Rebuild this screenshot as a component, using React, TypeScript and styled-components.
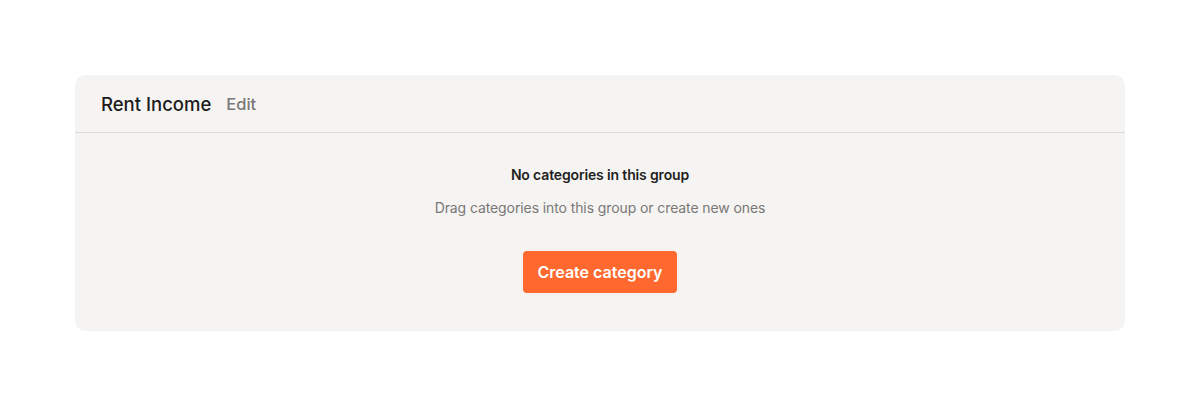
import styled, { createGlobalStyle } from "styled-components";

const GlobalStyle = createGlobalStyle`
  body {
    margin: 0;
    background: #ffffff;
    font-family: Inter, "Noto Sans", sans-serif;
  }
`;

const Page = styled.div`
  padding: 75px 75px 0 75px;
`;

const Card = styled.section`
  background: #f5f4f2;
  border-radius: 10px;
  overflow: hidden;
`;

const Header = styled.header`
  display: flex;
  align-items: center;
  gap: 15px;
  height: 58px;
  padding: 0 26px;
  border-bottom: 1px solid #dcdad7;
  box-sizing: border-box;
`;

const Title = styled.h2`
  margin: 0;
  font-size: 18.5px;
  font-weight: 500;
  color: #1c1c1c;
`;

const EditLink = styled.button`
  border: none;
  background: none;
  padding: 0;
  font-family: inherit;
  font-size: 16.5px;
  font-weight: 500;
  color: #7a7876;
  cursor: pointer;
`;

const Body = styled.div`
  display: flex;
  flex-direction: column;
  align-items: center;
  padding: 32px 0 38px;
`;

const EmptyTitle = styled.p`
  margin: 0;
  font-size: 14px;
  line-height: 20px;
  font-weight: 600;
  letter-spacing: -0.15px;
  color: #1f1f1f;
`;

const EmptyText = styled.p`
  margin: 13px 0 0;
  font-size: 14px;
  line-height: 20px;
  letter-spacing: -0.1px;
  color: #7a7876;
`;

const PrimaryButton = styled.button`
  margin-top: 33px;
  height: 42px;
  padding: 0 14.5px;
  border: none;
  border-radius: 4px;
  background: #ff692f;
  color: #ffffff;
  font-family: inherit;
  font-size: 16px;
  font-weight: 600;
  cursor: pointer;
`;

export default function App() {
  return (
    <>
      <GlobalStyle />
      <Page>
        <Card>
          <Header>
            <Title>Rent Income</Title>
            <EditLink>Edit</EditLink>
          </Header>
          <Body>
            <EmptyTitle>No categories in this group</EmptyTitle>
            <EmptyText>Drag categories into this group or create new ones</EmptyText>
            <PrimaryButton>Create category</PrimaryButton>
          </Body>
        </Card>
      </Page>
    </>
  );
}
